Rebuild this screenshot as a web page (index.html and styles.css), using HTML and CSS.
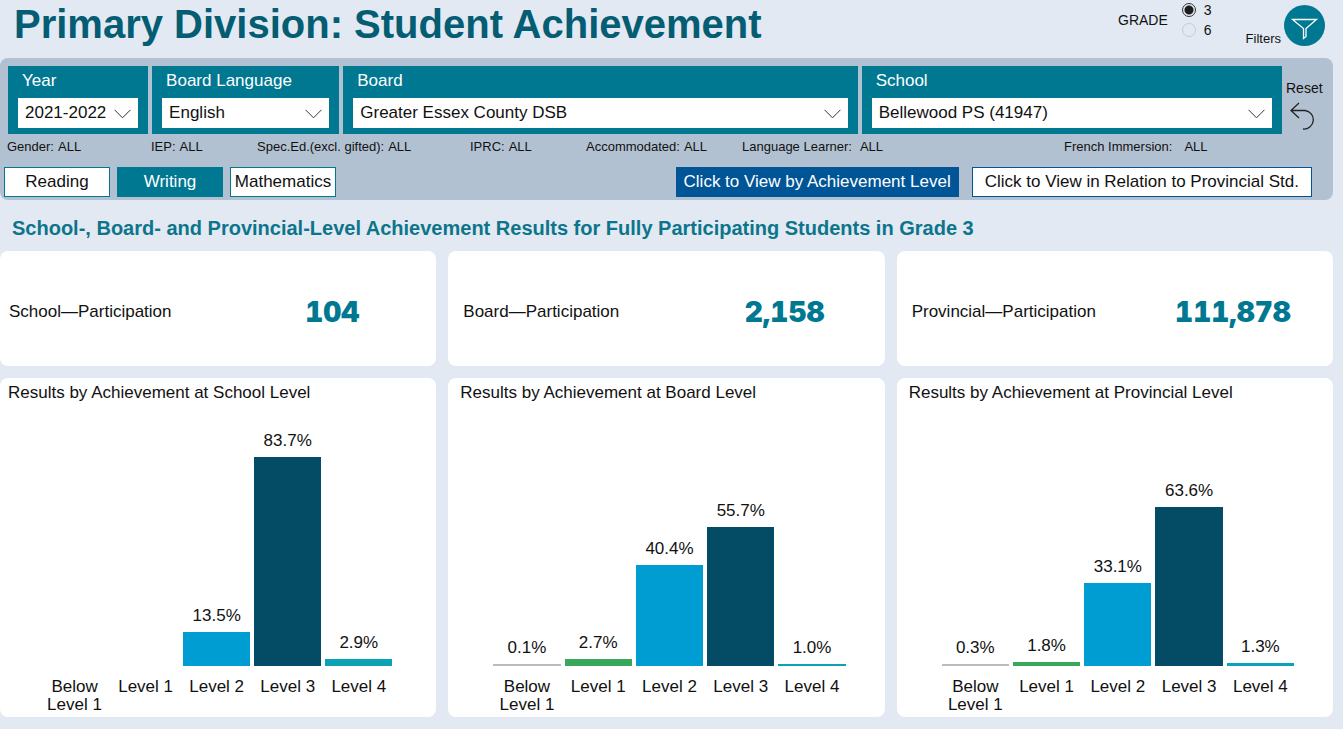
FILE: index.html
```html
<!DOCTYPE html>
<html lang="en">
<head>
<meta charset="utf-8">
<meta name="viewport" content="width=device-width, initial-scale=1">
<title>Primary Division: Student Achievement</title>
<link rel="stylesheet" href="styles.css">
</head>
<body>
<header class="page-header">
  <h1 class="page-title">Primary Division: Student Achievement</h1>
  <div class="grade" role="radiogroup" aria-labelledby="grade-label">
    <span id="grade-label">GRADE</span>
    <div class="grade-options">
      <label class="grade-option"><input class="radio" type="radio" name="grade" value="3" checked>3</label>
      <label class="grade-option"><input class="radio" type="radio" name="grade" value="6">6</label>
    </div>
  </div>
  <button class="filters-button" type="button">
    <span>Filters</span>
    <svg class="filters-icon" viewBox="0 0 41 41" aria-hidden="true">
      <circle cx="20.5" cy="20.5" r="20.5" fill="#007892"/>
      <path d="M8.5 14.500H32.500L22 23.500V31.500L19.500 33.500V23.500Z" fill="none" stroke="#fff" stroke-width="1.300"/>
    </svg>
  </button>
</header>

<section class="panel" aria-label="Report filters">
  <div class="slicers">
    <div class="slicer">
      <label class="slicer-label" for="year">Year</label>
      <div class="select-wrap">
        <select class="select" id="year"><option>2021-2022</option></select>
        <svg class="chevron" viewBox="0 0 17 10" aria-hidden="true"><path d="M.5.8 8.500 8.800 16.500.8"/></svg>
      </div>
    </div>
    <div class="slicer">
      <label class="slicer-label" for="language">Board Language</label>
      <div class="select-wrap">
        <select class="select" id="language"><option>English</option></select>
        <svg class="chevron" viewBox="0 0 17 10" aria-hidden="true"><path d="M.5.8 8.500 8.800 16.500.8"/></svg>
      </div>
    </div>
    <div class="slicer">
      <label class="slicer-label" for="board">Board</label>
      <div class="select-wrap">
        <select class="select" id="board"><option>Greater Essex County DSB</option></select>
        <svg class="chevron" viewBox="0 0 17 10" aria-hidden="true"><path d="M.5.8 8.500 8.800 16.500.8"/></svg>
      </div>
    </div>
    <div class="slicer">
      <label class="slicer-label" for="school">School</label>
      <div class="select-wrap">
        <select class="select" id="school"><option>Bellewood PS (41947)</option></select>
        <svg class="chevron" viewBox="0 0 17 10" aria-hidden="true"><path d="M.5.8 8.500 8.800 16.500.8"/></svg>
      </div>
    </div>
    <button class="reset-button" type="button">
      <span>Reset</span>
      <svg class="reset-icon" viewBox="0 0 25 28" aria-hidden="true"><path d="M9 1 1 8.500 9 16M1 8.500H15A9.300 9.300 0 0 1 13 27"/></svg>
    </button>
  </div>

  <dl class="status">
    <div class="status-item"><dt>Gender:</dt><dd>ALL</dd></div>
    <div class="status-item"><dt>IEP:</dt><dd>ALL</dd></div>
    <div class="status-item"><dt>Spec.Ed.(excl. gifted):</dt><dd>ALL</dd></div>
    <div class="status-item"><dt>IPRC:</dt><dd>ALL</dd></div>
    <div class="status-item"><dt>Accommodated:</dt><dd>ALL</dd></div>
    <div class="status-item status-item-wide"><dt>Language Learner:</dt><dd>ALL</dd></div>
    <div class="status-item status-item-widest"><dt>French Immersion:</dt><dd>ALL</dd></div>
  </dl>

  <div class="toolbar">
    <button class="button button-subject" type="button">Reading</button>
    <button class="button button-subject button-active" type="button">Writing</button>
    <button class="button button-subject" type="button">Mathematics</button>
    <button class="button button-view button-view-active" type="button">Click to View by Achievement Level</button>
    <button class="button button-view" type="button">Click to View in Relation to Provincial Std.</button>
  </div>
</section>

<main class="results">
  <h2 class="results-title">School-, Board- and Provincial-Level Achievement Results for Fully Participating Students in Grade 3</h2>
  <div class="cards">
    <section class="card participation participation-first">
      <span>School—Participation</span><strong class="count">104</strong>
    </section>
    <section class="card participation">
      <span>Board—Participation</span><strong class="count">2,158</strong>
    </section>
    <section class="card participation">
      <span>Provincial—Participation</span><strong class="count">111,878</strong>
    </section>

    <section class="card chart-card chart-card-first">
      <h3 class="chart-title">Results by Achievement at School Level</h3>
      <div class="chart">
        <div class="column"><div class="track"></div><span class="level">Below Level 1</span></div>
        <div class="column"><div class="track"></div><span class="level">Level 1</span></div>
        <div class="column"><div class="track"><span class="value">13.5%</span><div class="bar bar-level-2" style="height:13.5%"></div></div><span class="level">Level 2</span></div>
        <div class="column"><div class="track"><span class="value">83.7%</span><div class="bar bar-level-3" style="height:83.7%"></div></div><span class="level">Level 3</span></div>
        <div class="column"><div class="track"><span class="value">2.9%</span><div class="bar bar-level-4" style="height:2.9%"></div></div><span class="level">Level 4</span></div>
      </div>
    </section>
    <section class="card chart-card">
      <h3 class="chart-title">Results by Achievement at Board Level</h3>
      <div class="chart">
        <div class="column"><div class="track"><span class="value">0.1%</span><div class="bar bar-below" style="height:0.1%"></div></div><span class="level">Below Level 1</span></div>
        <div class="column"><div class="track"><span class="value">2.7%</span><div class="bar bar-level-1" style="height:2.7%"></div></div><span class="level">Level 1</span></div>
        <div class="column"><div class="track"><span class="value">40.4%</span><div class="bar bar-level-2" style="height:40.4%"></div></div><span class="level">Level 2</span></div>
        <div class="column"><div class="track"><span class="value">55.7%</span><div class="bar bar-level-3" style="height:55.7%"></div></div><span class="level">Level 3</span></div>
        <div class="column"><div class="track"><span class="value">1.0%</span><div class="bar bar-level-4" style="height:1%"></div></div><span class="level">Level 4</span></div>
      </div>
    </section>
    <section class="card chart-card">
      <h3 class="chart-title">Results by Achievement at Provincial Level</h3>
      <div class="chart">
        <div class="column"><div class="track"><span class="value">0.3%</span><div class="bar bar-below" style="height:0.3%"></div></div><span class="level">Below Level 1</span></div>
        <div class="column"><div class="track"><span class="value">1.8%</span><div class="bar bar-level-1" style="height:1.8%"></div></div><span class="level">Level 1</span></div>
        <div class="column"><div class="track"><span class="value">33.1%</span><div class="bar bar-level-2" style="height:33.1%"></div></div><span class="level">Level 2</span></div>
        <div class="column"><div class="track"><span class="value">63.6%</span><div class="bar bar-level-3" style="height:63.6%"></div></div><span class="level">Level 3</span></div>
        <div class="column"><div class="track"><span class="value">1.3%</span><div class="bar bar-level-4" style="height:1.3%"></div></div><span class="level">Level 4</span></div>
      </div>
    </section>
  </div>
</main>
</body>
</html>
```

FILE: styles.css
```css
* {
  box-sizing: border-box;
}

body {
  margin: 0;
  padding: 0 10px 12px 0;
  background: #e3e9f3;
  color: #111;
  font: 17px/20px "Liberation Sans", Arial, sans-serif;
}

button,
select {
  font: inherit;
  color: inherit;
}

button {
  padding: 0;
  border: 0;
  background: none;
  cursor: pointer;
}

/* Header */
.page-header {
  display: flex;
  align-items: flex-start;
  min-height: 58px;
  padding: 0 8px 0 14px;
  font-size: 14px;
}

.page-title {
  flex: 1;
  margin: 0;
  padding-top: 2px;
  color: #045d73;
  font-size: 40px;
  line-height: 44px;
}

.grade {
  display: flex;
  align-items: center;
  gap: 14px;
  margin-right: 34px;
}

.grade-option {
  display: flex;
  align-items: center;
  gap: 8px;
}

.radio {
  appearance: none;
  width: 14px;
  height: 14px;
  margin: 0;
  border: 1px solid #c6cbd3;
  border-radius: 50%;
}

.radio:checked {
  border-color: #333;
  background: radial-gradient(circle, #1c1c1c 4px, transparent 5px);
}

.filters-button {
  display: flex;
  align-items: flex-end;
  gap: 3px;
  margin-top: 5px;
  font-size: 13px;
  line-height: 14px;
}

.filters-icon {
  width: 41px;
  height: 41px;
}

/* Filter panel */
.panel {
  padding-bottom: 3px;
  border-radius: 8px;
  background: #b2c1d1;
}

.slicers {
  display: grid;
  grid-template-columns: 140fr 187fr 514fr 420fr 37px;
  gap: 4px;
  padding: 8px 10px 0 8px;
}

.slicer {
  min-width: 0;
  padding: 5px 10px 6px;
  background: #007892;
}

.slicer-label {
  display: block;
  margin-bottom: 7px;
  padding-left: 4px;
  color: #fff;
}

.select-wrap {
  position: relative;
}

.select {
  appearance: none;
  display: block;
  width: 100%;
  height: 30px;
  padding: 0 0 0 7px;
  border: 0;
  border-radius: 0;
  background: #fff;
}

.chevron {
  position: absolute;
  top: 11px;
  right: 7px;
  width: 17px;
  height: 10px;
  fill: none;
  stroke: #333;
  pointer-events: none;
}

.reset-button {
  display: flex;
  flex-direction: column;
  align-items: flex-start;
  padding-top: 12px;
  font-size: 14px;
}

.reset-icon {
  width: 25px;
  height: 28px;
  margin: 4px 0 0 4px;
  fill: none;
  stroke: #222;
  stroke-width: 1.300;
}

.status {
  display: grid;
  grid-template-columns: 144fr 106fr 213fr 116fr 156fr 322fr 269fr;
  margin: 5px 0 0;
  padding-left: 7px;
  font-size: 13px;
  line-height: 16px;
  white-space: nowrap;
}

.status-item {
  display: flex;
  gap: 4px;
}

.status-item-wide {
  gap: 8px;
}

.status-item-widest {
  gap: 12px;
}

.status dd {
  margin: 0;
}

.toolbar {
  display: flex;
  gap: 7px;
  margin-top: 12px;
  padding: 0 21px 0 4px;
}

.button {
  height: 30px;
  border: 1px solid #007892;
  background: #fff;
  white-space: nowrap;
}

.button-subject {
  width: 106px;
}

.button-active {
  background: #007892;
  color: #fff;
}

.button-view {
  margin-left: 6px;
  padding: 0 12px;
  border-color: #005596;
}

.button-view-active {
  margin-left: auto;
  padding: 0 7px;
  background: #005596;
  color: #fff;
}

/* Results */
.results-title {
  margin: 0;
  padding: 16px 0 11px 12px;
  color: #0c758b;
  font-size: 20px;
  line-height: 24px;
}

.cards {
  display: grid;
  grid-template-columns: repeat(3, minmax(0, 1fr));
  gap: 12px;
}

.card {
  border-radius: 8px;
  background: #fff;
}

.participation {
  display: grid;
  grid-template-columns: 1fr 200px;
  align-items: center;
  min-height: 115px;
  padding: 6px 0 0 15px;
}

.participation-first {
  padding: 6px 4px 0 9px;
}

.count {
  color: #007892;
  font-family: "Arial Black", Inter, sans-serif;
  font-size: 28px;
  font-variant-numeric: tabular-nums;
  font-weight: 900;
  line-height: 32px;
  text-align: center;
}

.chart-card {
  padding: 5px 39px 3px 45px;
}

.chart-card-first {
  padding: 5px 44px 3px 41px;
}

.chart-title {
  margin: 0 -33px 13px;
  font-size: 17px;
  font-weight: normal;
}

.chart {
  display: grid;
  grid-template-columns: repeat(5, 1fr);
  gap: 4px;
}

.track {
  display: flex;
  flex-direction: column;
  justify-content: flex-end;
  height: 250px;
  margin-bottom: 12px;
}

.value {
  margin-bottom: 6px;
  text-align: center;
}

.bar {
  flex-shrink: 0;
  min-height: 2px;
}

.bar-below {
  background: #bbb;
}

.bar-level-1 {
  background: #37a85b;
}

.bar-level-2 {
  background: #009dd3;
}

.bar-level-3 {
  background: #044b66;
}

.bar-level-4 {
  background: #0aa2b4;
}

.level {
  display: block;
  line-height: 18px;
  text-align: center;
}
```
